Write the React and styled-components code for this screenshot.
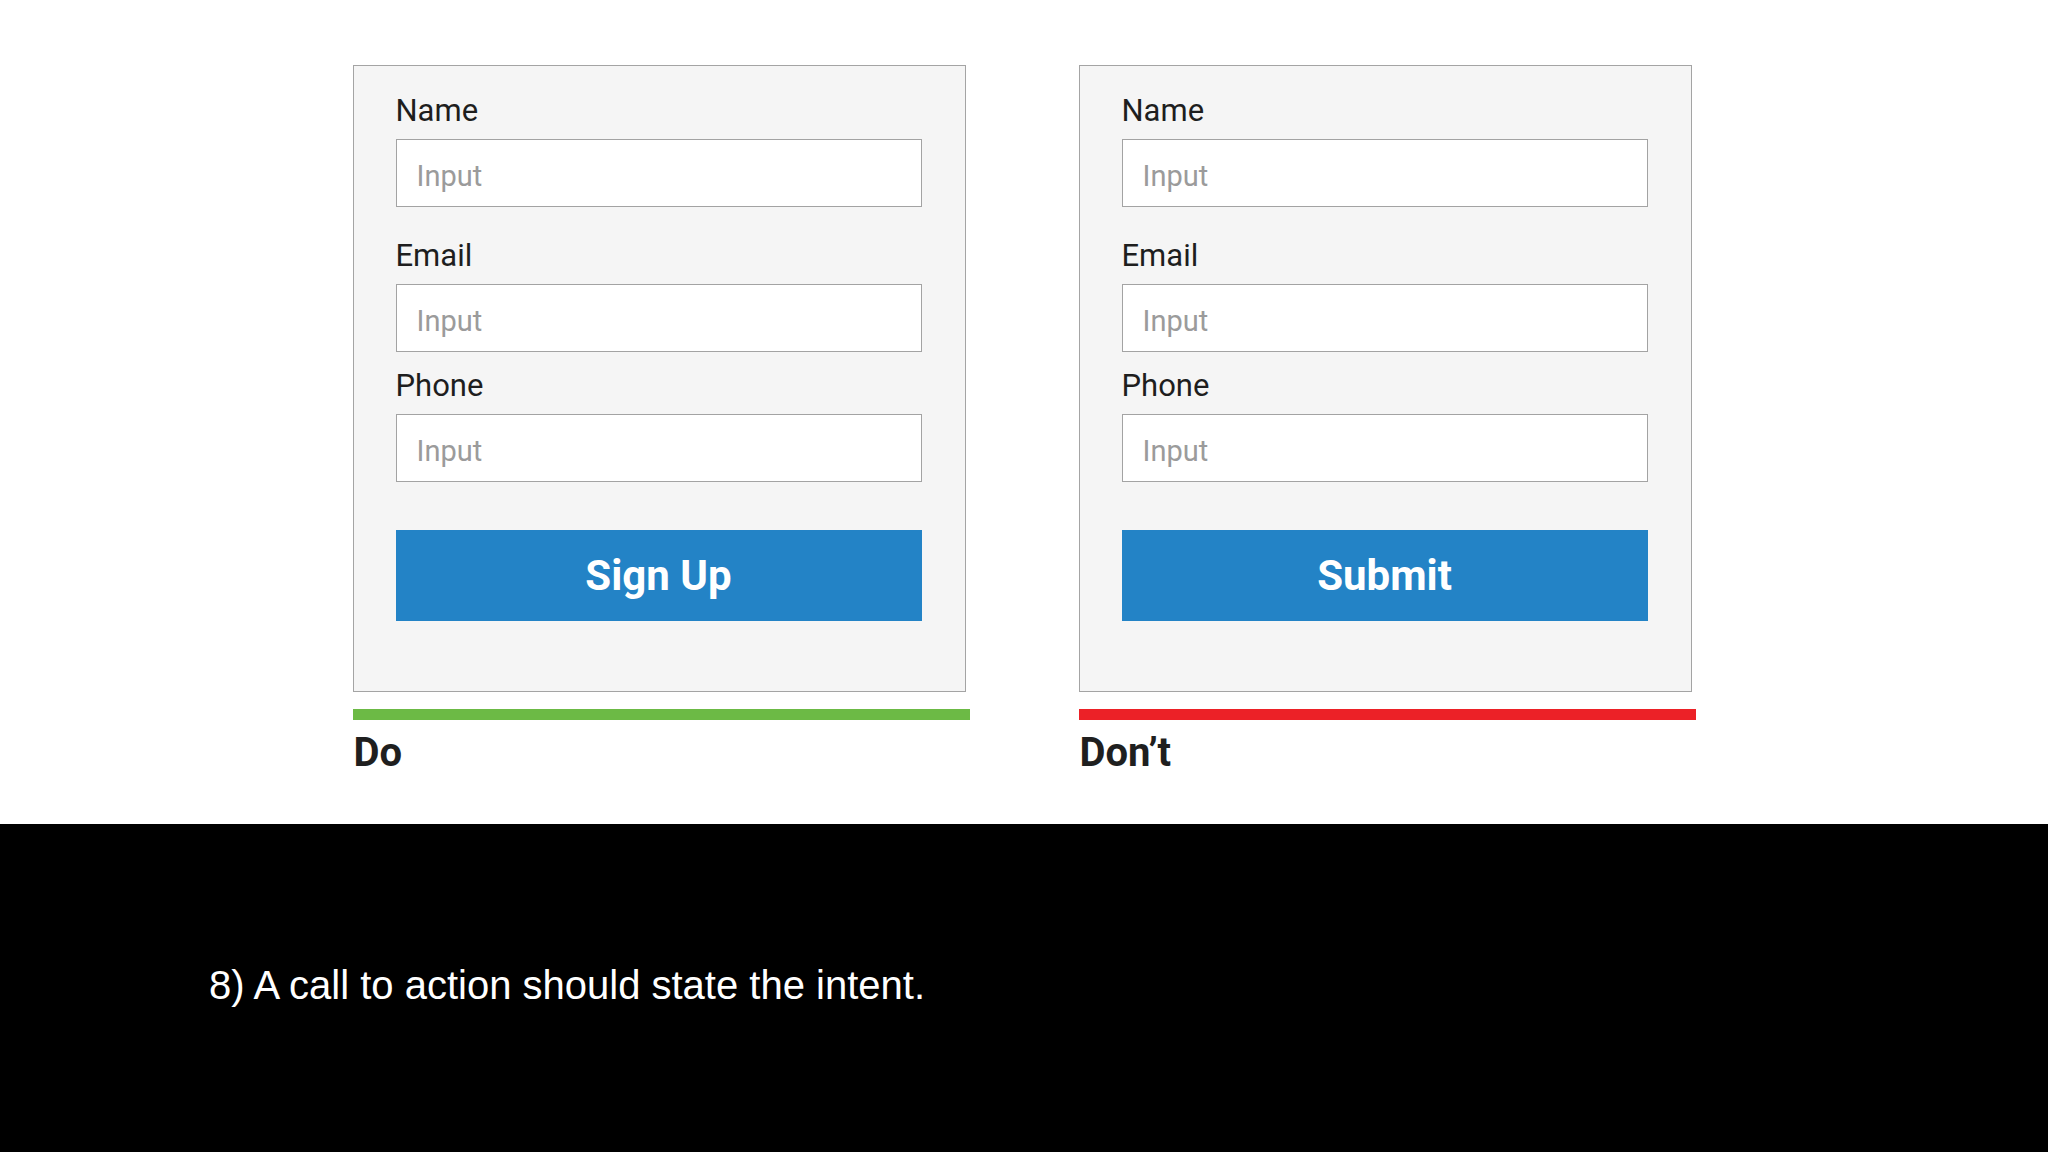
import React from "react";
import styled, { createGlobalStyle } from "styled-components";

const GlobalStyle = createGlobalStyle`
  html, body {
    margin: 0;
    padding: 0;
    background: #ffffff;
  }
  * { box-sizing: border-box; }
`;

const Page = styled.div`
  width: 2048px;
  height: 1152px;
  display: flex;
  flex-direction: column;
  overflow: hidden;
`;

const Stage = styled.section`
  height: 824px;
  flex: none;
  background: #ffffff;
  padding-top: 65px;
  display: flex;
  justify-content: center;
  gap: 109px;
`;

const Column = styled.div`
  width: 617px;
  display: flex;
  flex-direction: column;
`;

const Card = styled.form`
  width: 613px;
  height: 627px;
  border: 1px solid #a4a4a4;
  background: #f5f5f5;
  padding: 27px 43px 0 42px;
  display: flex;
  flex-direction: column;
`;

const Label = styled.label`
  display: block;
  font-family: Roboto, "Noto Sans", sans-serif;
  font-size: 31px;
  line-height: 36px;
  color: #1e1e1e;
  margin-top: ${(p) => p.$gap || 0}px;
`;

const Field = styled.input`
  display: block;
  width: 100%;
  height: 68px;
  margin: 10px 0 0;
  border: 1px solid #a3a3a3;
  border-radius: 0;
  background: #ffffff;
  padding: 6px 0 0 20px;
  font-family: Roboto, "Noto Sans", sans-serif;
  font-size: 29px;
  color: #333;
  outline: none;
  &::placeholder {
    color: #9b9b9b;
    opacity: 1;
  }
`;

const Action = styled.button`
  margin-top: 48px;
  width: 100%;
  height: 91px;
  border: none;
  border-radius: 0;
  background: #2383c6;
  color: #ffffff;
  font-family: Roboto, "Noto Sans", sans-serif;
  font-weight: 700;
  font-size: 42px;
  display: flex;
  align-items: center;
  justify-content: center;
  padding: 0;
  cursor: pointer;
`;

const Bar = styled.div`
  margin-top: 17px;
  height: 11px;
  width: 100%;
  background: ${(p) => p.$color};
`;

const Verdict = styled.div`
  margin-top: 9px;
  padding-left: 1px;
  font-family: Roboto, "Noto Sans", sans-serif;
  font-weight: 700;
  font-size: 40px;
  color: #1f1f1f;
`;

const Caption = styled.section`
  flex: 1;
  background: #000000;
  padding: 139px 0 0 209px;
  font-family: "Liberation Sans", Arial, sans-serif;
  font-size: 40px;
  color: #ffffff;
`;

const fields = [
  { label: "Name", gap: 0 },
  { label: "Email", gap: 31 },
  { label: "Phone", gap: 16 },
];

function Example({ action, verdict, color }) {
  return (
    <Column>
      <Card onSubmit={(e) => e.preventDefault()}>
        {fields.map((f) => (
          <React.Fragment key={f.label}>
            <Label $gap={f.gap}>{f.label}</Label>
            <Field placeholder="Input" />
          </React.Fragment>
        ))}
        <Action type="button">{action}</Action>
      </Card>
      <Bar $color={color} />
      <Verdict>{verdict}</Verdict>
    </Column>
  );
}

export default function App() {
  return (
    <Page>
      <GlobalStyle />
      <Stage>
        <Example action="Sign Up" verdict="Do" color="#6cba45" />
        <Example action="Submit" verdict="Don’t" color="#ec2127" />
      </Stage>
      <Caption>8) A call to action should state the intent.</Caption>
    </Page>
  );
}
